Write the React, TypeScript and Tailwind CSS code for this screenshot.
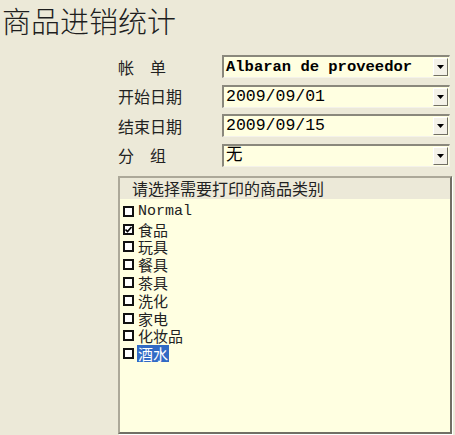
import React from "react";

const cjk = { fontFamily: '"Noto Sans CJK SC", sans-serif' };
const mono = { fontFamily: '"Liberation Mono", "Noto Sans CJK SC", monospace' };

function Arrow() {
  return (
    <div className="flex h-full w-[15px] items-center justify-center border-l border-t border-l-[#ffffff] border-t-[#ffffff] border-r border-b border-r-[#716f64] border-b-[#716f64] bg-[#f4f2e8]">
      <svg width="7" height="4" viewBox="0 0 7 4">
        <polygon points="0,0 7,0 3.5,4" fill="#000" />
      </svg>
    </div>
  );
}

function Field({ label, value, monoText }: { label: string; value: string; monoText?: boolean }) {
  return (
    <div className="flex items-center">
      <div className="w-[104px] text-[16px] leading-[20px] text-[#222]" style={cjk}>
        {label}
      </div>
      <div className="flex h-[23px] w-[228px] items-stretch border-t-2 border-l-2 border-t-[#8a887c] border-l-[#8a887c] border-b border-r border-b-[#f4f2ea] border-r-[#f4f2ea] bg-[#ffffe1]">
        <div
          className={`flex-1 pl-[2px] leading-[20px] text-black ${monoText ? "font-bold" : ""}`}
          style={monoText ? { ...mono, fontSize: "15.5px" } : { ...mono, fontSize: "16.5px" }}
        >
          {value}
        </div>
        <div className="py-[1px] pr-[1px]">
          <Arrow />
        </div>
      </div>
    </div>
  );
}

const items: { name: string; checked?: boolean; selected?: boolean; mono?: boolean }[] = [
  { name: "Normal", mono: true },
  { name: "食品", checked: true },
  { name: "玩具" },
  { name: "餐具" },
  { name: "茶具" },
  { name: "洗化" },
  { name: "家电" },
  { name: "化妆品" },
  { name: "酒水", selected: true },
];

export default function App() {
  return (
    <div className="h-[435px] w-[455px] overflow-hidden bg-[#ece9d8]">
      <div className="pl-[2px] text-[29px] font-light leading-[40px] text-[#1e1e1e]" style={cjk}>
        商品进销统计
      </div>
      <div className="ml-[118px] mt-[15px] flex flex-col gap-[6.5px]">
        <Field label="帐　单" value="Albaran de proveedor" monoText />
        <Field label="开始日期" value="2009/09/01" />
        <Field label="结束日期" value="2009/09/15" />
        <Field label="分　组" value="无" />
      </div>
      <div className="ml-[118px] mt-[9px] flex h-[258px] w-[334px] flex-col border-2 border-t-[#aca899] border-l-[#aca899] border-b-[#716f64] border-r-[#716f64] shadow-[inset_-1px_-1px_0_#ece9d8,1px_1px_0_#ffffff]">
        <div className="h-[21px] bg-[#ece9d8] pl-[12px] text-[16px] leading-[21px] text-[#222]" style={cjk}>
          请选择需要打印的商品类别
        </div>
        <div className="flex-1 bg-[#ffffe1] pl-[3px] pt-[4px]">
          {items.map((it) => (
            <div key={it.name} className="flex h-[17.8px] items-center">
              <div className="flex h-[11px] w-[11px] shrink-0 items-center justify-center border-2 border-[#111] bg-white">
                {it.checked && (
                  <svg width="7" height="7" viewBox="0 0 7 7">
                    <polyline points="0.5,3.5 2.5,5.5 6.5,1" fill="none" stroke="#000" strokeWidth="1.6" />
                  </svg>
                )}
              </div>
              <div
                className={`ml-[3px] px-[1px] text-[15px] leading-[17px] ${it.selected ? "bg-[#316ac5] text-white" : "text-[#222]"}`}
                style={it.mono ? mono : cjk}
              >
                {it.name}
              </div>
            </div>
          ))}
        </div>
      </div>
    </div>
  );
}
